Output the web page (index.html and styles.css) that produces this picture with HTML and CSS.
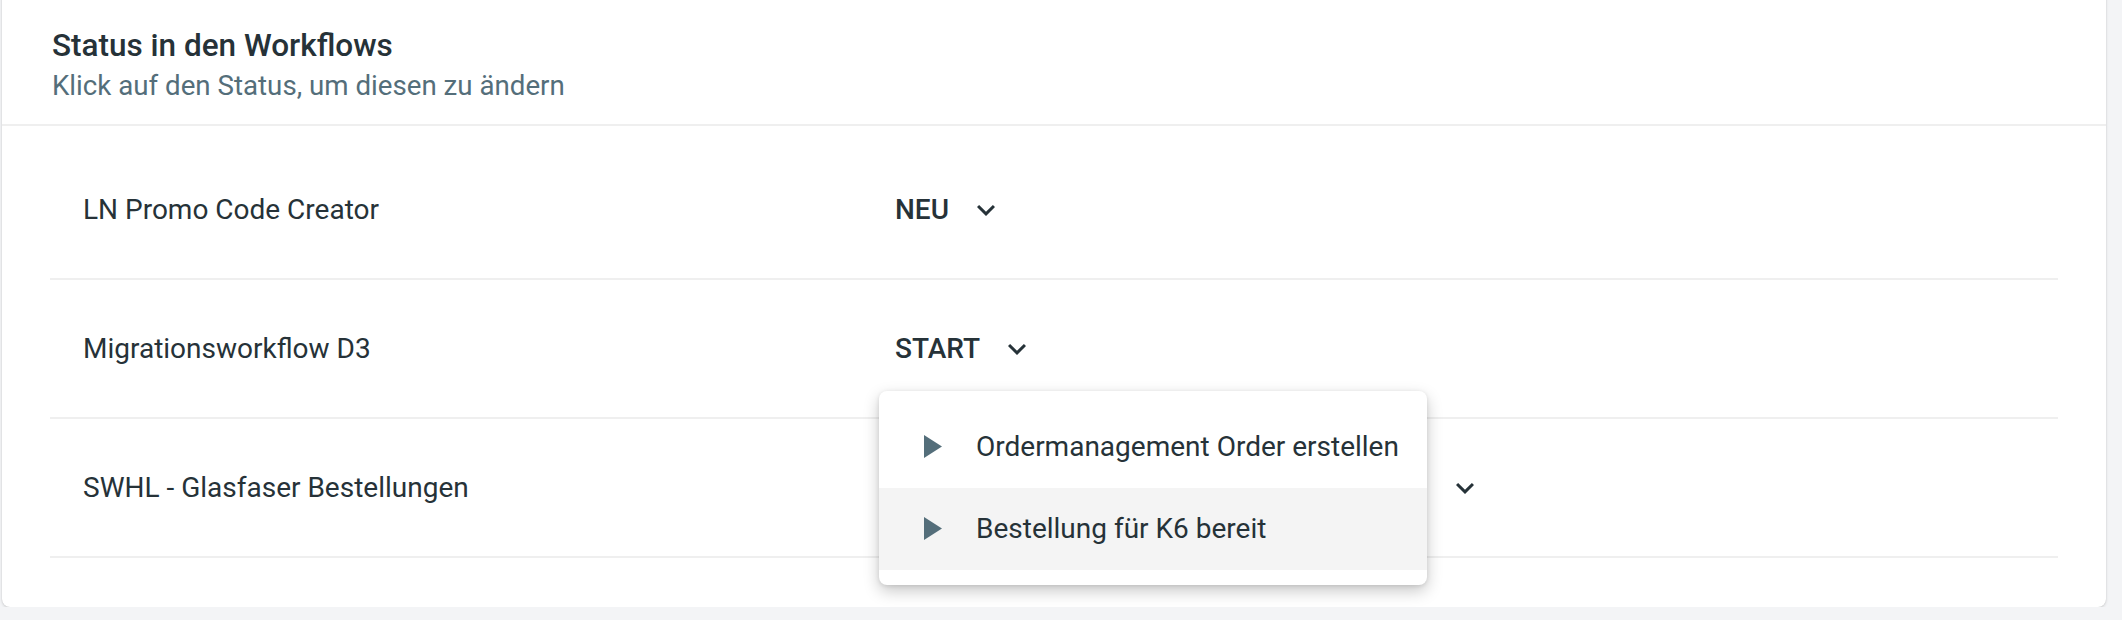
FILE: index.html
```html
<!DOCTYPE html>
<html>
<head>
	<title>Status in den Workflows</title>
	<meta charset="utf-8">
	<link rel="stylesheet" href="styles.css">
</head>
<body>
	<div class="page">
		<div class="card">
			<div class="card-head">
				<h2>Status in den Workflows</h2>
				<p>Klick auf den Status, um diesen zu ändern</p>
			</div>

			<ul class="workflows">
				<li class="workflow">
					<span class="wf-name">LN Promo Code Creator</span>
					<div class="wf-status">
						<span class="status-btn">NEU
							<svg class="chevron" viewBox="0 0 24 24"><path d="M16.59 8.59L12 13.17 7.41 8.59 6 10l6 6 6-6z"/></svg>
						</span>
					</div>
				</li>
				<li class="workflow">
					<span class="wf-name">Migrationsworkflow D3</span>
					<div class="wf-status">
						<span class="status-btn">START
							<svg class="chevron" viewBox="0 0 24 24"><path d="M16.59 8.59L12 13.17 7.41 8.59 6 10l6 6 6-6z"/></svg>
						</span>
						<ul class="status-menu">
							<li>
								<svg class="play" viewBox="0 0 18 23"><polygon points="0,0 18,11.5 0,23"/></svg>
								<span>Ordermanagement Order erstellen</span>
							</li>
							<li class="hover">
								<svg class="play" viewBox="0 0 18 23"><polygon points="0,0 18,11.5 0,23"/></svg>
								<span>Bestellung für K6 bereit</span>
							</li>
						</ul>
					</div>
				</li>
				<li class="workflow">
					<span class="wf-name">SWHL - Glasfaser Bestellungen</span>
					<div class="wf-status">
						<span class="status-btn">ORDERMANAGEMENT ORDER ERSTELLEN
							<svg class="chevron" viewBox="0 0 24 24"><path d="M16.59 8.59L12 13.17 7.41 8.59 6 10l6 6 6-6z"/></svg>
						</span>
					</div>
				</li>
			</ul>
		</div>
	</div>
</body>
</html>
```

FILE: styles.css
```css
*{
	padding: 0;
	margin: 0;
	box-sizing: border-box;
}
body{
	background-color: #f3f4f6;
	font-family: Roboto, "Noto Sans", Arial, sans-serif;
	color: #263238;
}
.page{
	padding: 0 16px 0 2px;
}
.card{
	margin-top: -20px;
	background-color: #fff;
	border-radius: 8px;
	box-shadow: 0 1px 3px rgba(0, 0, 0, 0.16), 0 0 1px rgba(0, 0, 0, 0.12);
	padding-bottom: 49px;
}
.card-head{
	padding: 48px 50px 20px;
	border-bottom: 2px solid #efefef;
}
.card-head h2{
	font-size: 31.5px;
	line-height: 36px;
	font-weight: 500;
}
.card-head p{
	margin-top: 4px;
	font-size: 27.7px;
	line-height: 36px;
	color: #546e7a;
}

.workflows{
	list-style: none;
	margin: 0 48px;
	padding-top: 15px;
}
.workflow{
	display: grid;
	grid-template-columns: 812px 1fr;
	align-items: center;
	height: 139px;
	padding-left: 33px;
	border-bottom: 2px solid #efefef;
	font-size: 28px;
}
.wf-status{
	position: relative;
}
.status-btn{
	display: inline-flex;
	align-items: center;
	gap: 19px;
	height: 36px;
	font-weight: 500;
	white-space: nowrap;
}
.chevron{
	width: 36px;
	height: 36px;
	fill: #263238;
}

/* open status dropdown */
.status-menu{
	position: absolute;
	z-index: 2;
	left: -16px;
	top: 60px;
	width: 548px;
	padding: 15px 0;
	list-style: none;
	background-color: #fff;
	border-radius: 8px;
	box-shadow: 0 6px 16px rgba(0, 0, 0, 0.22), 0 1px 4px rgba(0, 0, 0, 0.1);
}
.status-menu li{
	display: flex;
	align-items: center;
	gap: 34px;
	height: 82px;
	padding-left: 45px;
	font-size: 28px;
	white-space: nowrap;
}
.status-menu li.hover{
	background-color: #f4f4f4;
}
.play{
	width: 18px;
	height: 23px;
	fill: #546e7a;
}
```
